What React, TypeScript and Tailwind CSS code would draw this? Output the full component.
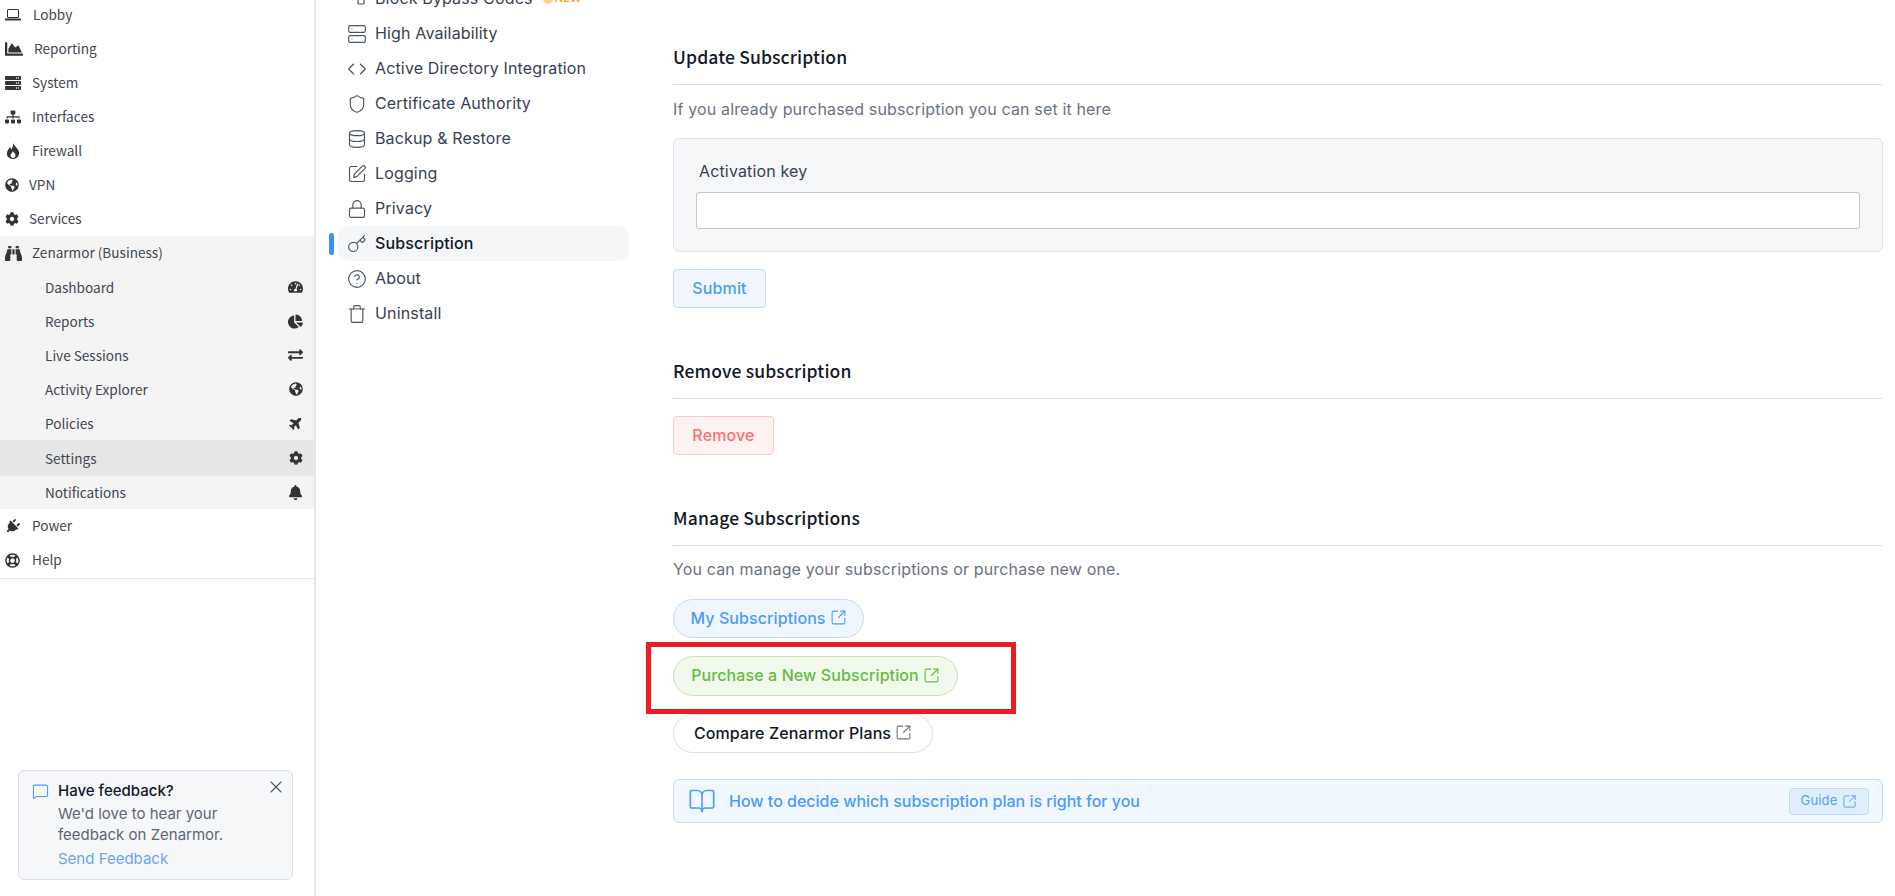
import React from 'react';
import {
  FaBell, FaBinoculars, FaChartArea, FaChartPie, FaCog, FaExchangeAlt, FaGlobeAmericas,
  FaRegLifeRing, FaPlane, FaPlug, FaServer, FaSitemap, FaTachometerAlt,
} from 'react-icons/fa';
import {
  BookOpen, CircleHelp, Code, Database, Key, Lock, MessageSquare, Server, Shield, SquareArrowOutUpRight, SquarePen, Trash, X,
} from 'lucide-react';

const LaptopIcon = () => (
  <svg width="16" height="12" viewBox="0 0 16 12" fill="none" stroke="currentColor">
    <rect x="2.5" y="0.5" width="11" height="8" rx="0.5" />
    <path d="M0 10.5h16" strokeWidth="2" />
  </svg>
);

const FlameIcon = () => (
  <svg width="14" height="16" viewBox="0 0 14 16" fill="currentColor" fillRule="evenodd" className="ml-[1px]">
    <path d="M7 0C8 3 12 5 13 9c.7 3.5-2 7-6 7S.3 13 1 9.5C1.5 7 3 6 4 4c1 1 1 2 1 3 1-2 2.5-4 2-7zM7 8c-.5 2-2.8 3-2.5 4.8.2 1.2 1.3 2.2 2.5 2.2s2.2-.8 2.5-2C10 10.500 7.500 10 7 8z" />
  </svg>
);

const BypassIcon = () => (
  <svg width="20" height="20" viewBox="0 0 20 20" fill="none" stroke="currentColor" strokeWidth="1.2">
    <path d="M2 3h10M2 6h8" />
    <rect x="11" y="9" width="6" height="6" rx="1" />
  </svg>
);

const topItems = [
  { label: 'Lobby', icon: <LaptopIcon />, box: 'w-[28px]' },
  { label: 'Reporting', icon: <FaChartArea size={18} />, box: 'w-[29px]' },
  { label: 'System', icon: <FaServer size={16} />, box: 'w-[27px]' },
  { label: 'Interfaces', icon: <FaSitemap size={16} />, box: 'w-[27px]' },
  { label: 'Firewall', icon: <FlameIcon />, box: 'w-[27px]' },
  { label: 'VPN', icon: <FaGlobeAmericas size={14} />, box: 'w-[24px]' },
  { label: 'Services', icon: <FaCog size={14} />, box: 'w-[24px]' },
];

const subItems = [
  { label: 'Dashboard', icon: <FaTachometerAlt size={16} />, row: 'h-[34px]' },
  { label: 'Reports', icon: <FaChartPie size={15} />, row: 'h-[34px]' },
  { label: 'Live Sessions', icon: <FaExchangeAlt size={16} />, row: 'h-[34px]' },
  { label: 'Activity Explorer', icon: <FaGlobeAmericas size={14} />, row: 'h-[34px]' },
  { label: 'Policies', icon: <FaPlane size={14} className="-rotate-45" />, row: 'h-[34px]' },
  { label: 'Settings', icon: <FaCog size={14} />, row: 'h-[36px] bg-[#e6e6e6]' },
  { label: 'Notifications', icon: <FaBell size={15} />, row: 'h-[33px]' },
];

const settingsItems = [
  { label: 'High Availability', icon: <Server size={20} strokeWidth={1.4} /> },
  { label: 'Active Directory Integration', icon: <Code size={20} strokeWidth={1.4} /> },
  { label: 'Certificate Authority', icon: <Shield size={20} strokeWidth={1.4} /> },
  { label: 'Backup & Restore', icon: <Database size={20} strokeWidth={1.4} /> },
  { label: 'Logging', icon: <SquarePen size={20} strokeWidth={1.4} /> },
  { label: 'Privacy', icon: <Lock size={20} strokeWidth={1.4} /> },
  { label: 'Subscription', icon: <Key size={20} strokeWidth={1.4} />, active: true },
  { label: 'About', icon: <CircleHelp size={20} strokeWidth={1.4} /> },
  { label: 'Uninstall', icon: <Trash size={20} strokeWidth={1.4} /> },
];

const sidebarFont = "font-['Noto_Sans_CJK_SC',sans-serif]";

const SectionTitle: React.FC<{ title: string }> = ({ title }) => (
  <div className="border-b border-[#dcdfe6] pb-[15px] -mt-[1px]">
    <h2 className={`${sidebarFont} text-[17.5px] leading-[24px] font-medium text-[#111827]`}>{title}</h2>
  </div>
);

const Sidebar = () => (
  <aside className={`w-[316px] shrink-0 h-full border-r-2 border-[#e5e7eb] bg-white flex flex-col text-[13.6px] text-[#3f4652] ${sidebarFont}`}>
    <ul className="border-b border-[#e5e5e5] -mt-[2px] pb-[1px]">
      {topItems.map(item => (
        <li key={item.label} className="h-[34px] flex items-center pl-[5px]">
          <span className={`${item.box} text-[#333]`}>{item.icon}</span>
          <span className="pb-[2px]">{item.label}</span>
        </li>
      ))}
      <li className="bg-[#f4f4f4]">
        <div className="h-[34px] flex items-center pl-[5px]">
          <span className="w-[27px] text-[#333]"><FaBinoculars size={17} /></span>
          <span className="pb-[2px]">Zenarmor (Business)</span>
        </div>
        <ul>
          {subItems.map(item => (
            <li key={item.label} className={`flex items-center justify-between pl-[45px] pr-[11px] ${item.row}`}>
              <span>{item.label}</span>
              <span className="w-[15px] flex justify-center text-[#333]">{item.icon}</span>
            </li>
          ))}
        </ul>
      </li>
      <li className="h-[34px] flex items-center pl-[5px]">
        <span className="w-[27px] text-[#333]"><FaPlug size={15} className="rotate-45" /></span>
        <span className="pb-[2px]">Power</span>
      </li>
      <li className="h-[34px] flex items-center pl-[5px]">
        <span className="w-[27px] text-[#333]"><FaRegLifeRing size={15} /></span>
        <span className="pb-[2px]">Help</span>
      </li>
    </ul>
    <div className="mt-auto mb-[16px] ml-[18px] w-[275px] h-[110px] rounded-[6px] border border-[#d9dde5] bg-[#f6f7f9] flex pl-[13px] pt-[9px] font-['Inter',sans-serif]">
      <MessageSquare size={17} strokeWidth={1.5} className="text-[#4a9bf5] mt-[3px] shrink-0" />
      <div className="ml-[9px] flex-1 text-[15px] leading-[21px] text-[#5f6673]">
        <div className="font-medium text-[#111827]">Have feedback?</div>
        <div className="mt-[2px]">We'd love to hear your<br />feedback on Zenarmor.</div>
        <div className="mt-[3px] text-[#6ea3f5]">Send Feedback</div>
      </div>
      <X size={20} strokeWidth={1.3} className="text-[#4b5563] mr-[6px] -mt-[3px] shrink-0" />
    </div>
  </aside>
);

const SettingsNav = () => (
  <nav className="w-[357px] shrink-0 pl-[13px] -mt-[19px] font-['Inter',sans-serif] text-[16px] tracking-[0.15px] text-[#374151]">
    <div className="h-[35px] flex items-center ml-[9px] pl-[9px] gap-[8px]">
      <span className="text-[#4b5563]"><BypassIcon /></span>
      <span className="pb-[1px]">Block Bypass Codes</span>
      <span className="ml-[2px] w-[10px] h-[10px] rounded-full bg-[#fbd38d]" />
      <span className="-ml-[6px] text-[11px] font-semibold text-[#f5a623]">NEW</span>
    </div>
    {settingsItems.map(item => (
      <div key={item.label} className="relative h-[35px] flex items-center">
        {item.active && <span className="absolute left-0 top-[7px] bottom-[6px] w-[5px] rounded-full bg-[#3b90f0]" />}
        <div className={`ml-[9px] w-[291px] h-full flex items-center gap-[8px] rounded-[10px] pl-[9px] ${item.active ? 'bg-[#f5f6f8] text-[#111827]' : ''}`}>
          <span className="text-[#4b5563]">{item.icon}</span>
          <span className={`pb-[1px] ${item.active ? 'font-medium' : ''}`}>{item.label}</span>
        </div>
      </div>
    ))}
  </nav>
);

const PillLink: React.FC<{ label: string; className: string; iconClass: string }> = ({ label, className, iconClass }) => (
  <a className={`inline-flex items-center justify-center gap-[4px] rounded-full border pb-[2px] text-[16px] tracking-[0.1px] font-medium ${className}`}>
    {label}
    <SquareArrowOutUpRight size={17} strokeWidth={1.5} className={iconClass} />
  </a>
);

const MainPanel = () => (
  <main className="flex-1 pt-[46px] pr-[12px] font-['Inter',sans-serif] text-[16px] tracking-[0.15px] text-[#6b7280]">
    <SectionTitle title="Update Subscription" />
    <p className="mt-[14px] pb-[1px] leading-[20px]">If you already purchased subscription you can set it here</p>
    <div className="mt-[18px] h-[114px] rounded-[6px] border border-[#dfe2e8] bg-[#f6f7f9] px-[22px] pt-[22px]">
      <label className="block ml-[3px] leading-[20px] text-[#374151]">Activation key</label>
      <input className="block mt-[11px] w-full h-[37px] rounded-[3px] border border-[#c4c6ca] bg-white" />
    </div>
    <button className="mt-[17px] block h-[39px] w-[93px] pb-[2px] rounded-[4px] border border-[#bfdbfe] bg-[#eff6ff] text-[#4b9bf8] font-medium">Submit</button>

    <div className="mt-[52px]"><SectionTitle title="Remove subscription" /></div>
    <button className="mt-[17px] block h-[39px] w-[101px] pb-[2px] rounded-[4px] border border-[#fecaca] bg-[#fef2f2] text-[#f87171] font-medium">Remove</button>

    <div className="mt-[52px]"><SectionTitle title="Manage Subscriptions" /></div>
    <p className="mt-[13px] pb-[1px] leading-[20px]">You can manage your subscriptions or purchase new one.</p>
    <div className="mt-[19px] flex flex-col items-start">
      <PillLink label="My Subscriptions" className="w-[191px] h-[39px] border-[#bfdbfe] bg-[#eff6ff] text-[#4b9bf8]" iconClass="text-[#4b9bf8]" />
      <div className="relative mt-[18px]">
        <PillLink label="Purchase a New Subscription" className="w-[285px] h-[40px] border-[#c5e6b4] bg-[#f1f9ec] text-[#67bb45]" iconClass="text-[#67bb45]" />
        <div className="absolute -left-[27px] -top-[14px] -right-[58px] -bottom-[18px] border-[5px] border-[#ed1c24]" />
      </div>
      <div className="mt-[18px]">
        <PillLink label="Compare Zenarmor Plans" className="w-[260px] h-[39px] border-[#d9dde5] bg-white text-[#111827]" iconClass="text-[#6b7280]" />
      </div>
    </div>
    <div className="mt-[26px] h-[44px] rounded-[6px] border border-[#bfdbfe] bg-[#f0f7ff] flex items-center pl-[14px] pr-[13px] text-[#4b9bf8]">
      <BookOpen size={28} strokeWidth={1.4} />
      <span className="ml-[13px] flex-1 font-medium tracking-normal">How to decide which subscription plan is right for you</span>
      <a className="flex items-center justify-center gap-[5px] h-[27px] w-[80px] rounded-[4px] border border-[#bfdbfe] bg-[#e0efff] text-[13px] text-[#5a9ef5]">
        Guide
        <SquareArrowOutUpRight size={15} strokeWidth={1.5} />
      </a>
    </div>
  </main>
);

export default function App() {
  return (
    <div className="h-[896px] w-[1895px] overflow-hidden flex bg-white">
      <Sidebar />
      <SettingsNav />
      <MainPanel />
    </div>
  );
}
